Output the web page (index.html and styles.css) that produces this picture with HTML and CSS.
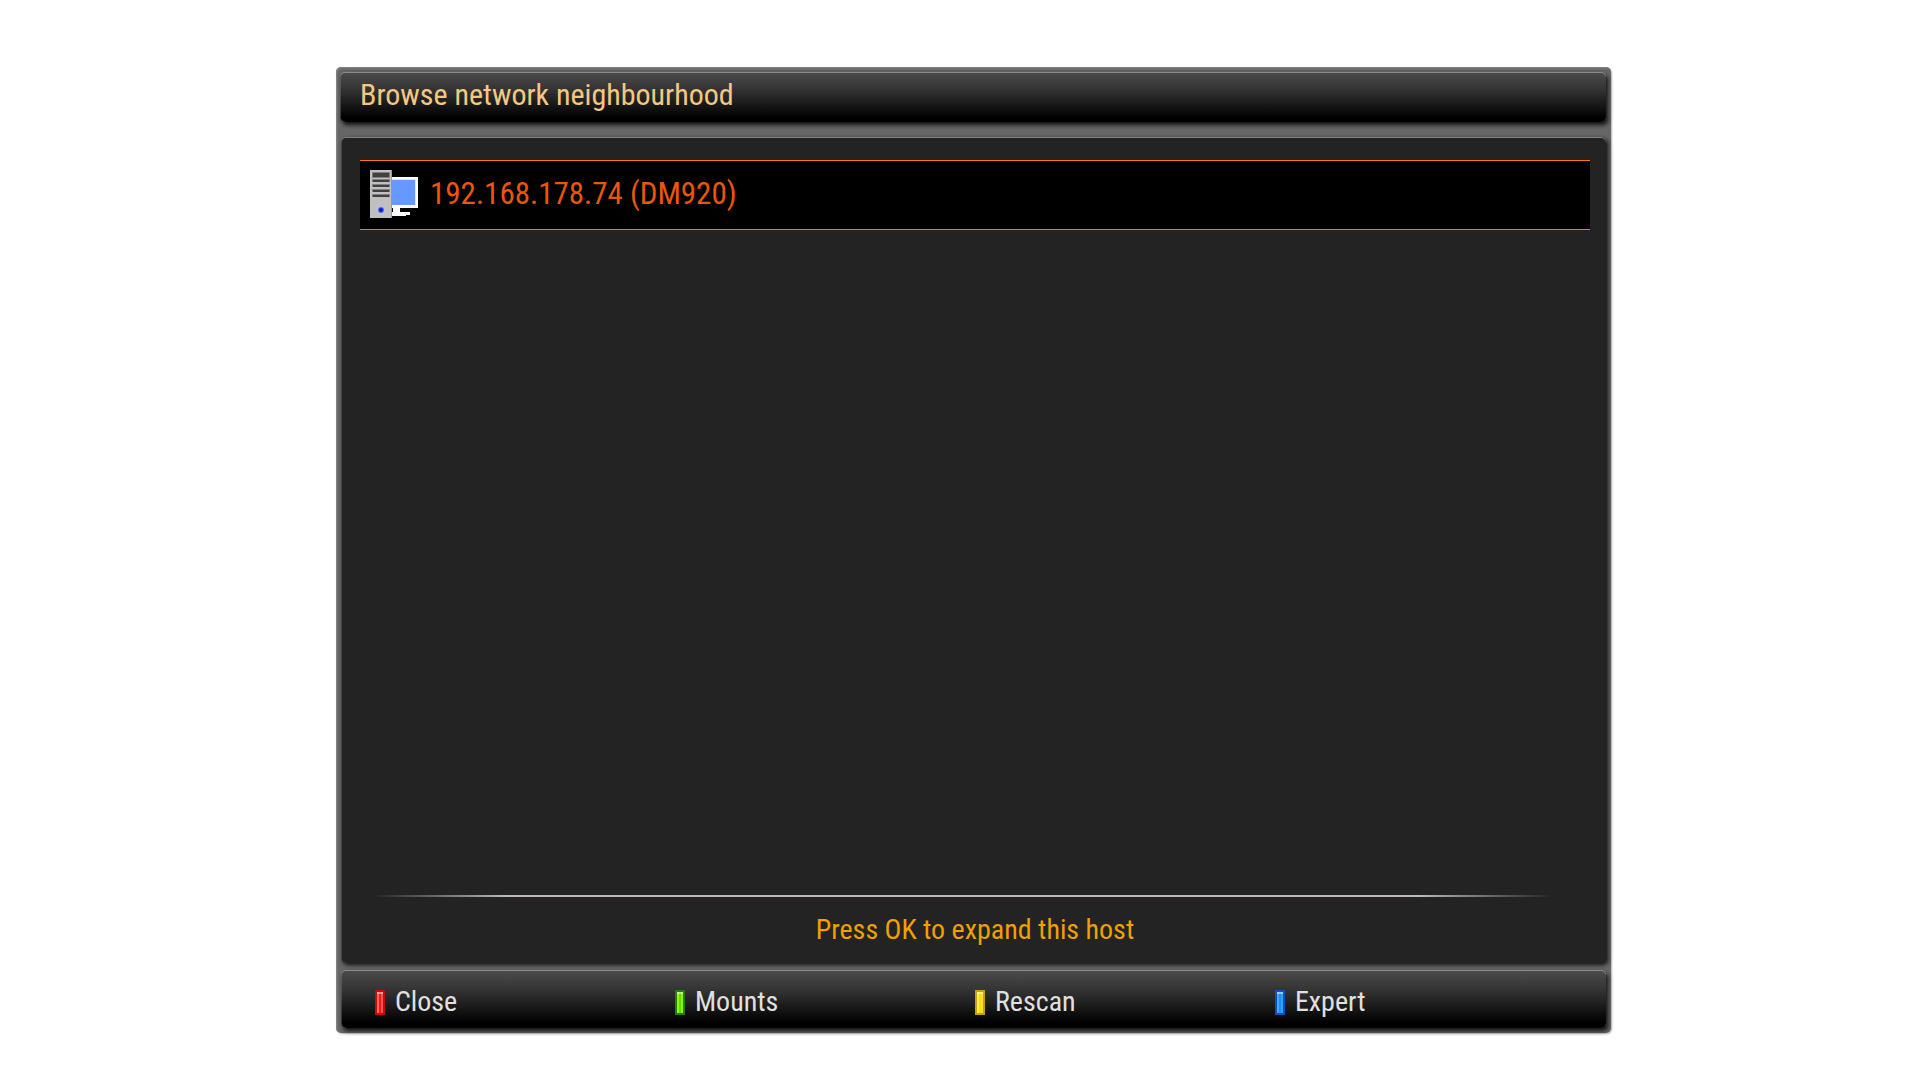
FILE: index.html
```
<!DOCTYPE html>
<html lang="en">

<head>
    <meta charset="utf-8">
    <meta name="viewport" content="width=device-width, initial-scale=1" />
    <title>Browse network neighbourhood</title>
    <link rel="stylesheet" href="styles.css">
</head>

<body>
    <div class="window">
        <header class="title">
            <h1>Browse network neighbourhood</h1>
        </header>
        <main class="panel">
            <ul class="hosts">
                <li>
                    <button class="host" type="button">
                        <svg class="pc" viewBox="0 0 48 48" aria-hidden="true">
                            <!-- monitor -->
                            <path fill="#fff" d="M21 7h27v31H30v4h10v3h-4v1H21v-4h2v-4h-2z" />
                            <path fill="#dfe8fb" d="M21 9h25v26H21z" />
                            <path fill="#6699ff" d="M21 10h24v25H21z" />
                            <!-- tower -->
                            <path fill="#c0c0c0" d="M0 0h22v48H0z" />
                            <path fill="#999" d="M21 0h1v48h-1z" />
                            <path fill="#808080" d="M2 2h18v6H2zM2 9h18v3H2zM2 14h18v3H2zM2 19h18v3H2zM2 24h18v3H2z" />
                            <path fill="#404040" d="M3 3h16v4H3zM3 10h16v2H3zM3 15h16v2H3zM3 20h16v2H3zM3 25h16v2H3z" />
                            <circle cx="11" cy="40" r="3" fill="#5070e8" />
                            <circle cx="11" cy="40" r="2" fill="#0020e0" />
                        </svg>
                        192.168.178.74 (DM920)
                    </button>
                </li>
            </ul>
            <hr class="line">
            <p class="hint">Press OK to expand this host</p>
        </main>
        <footer class="keys">
            <button class="key red" type="button"><i></i>Close</button>
            <button class="key green" type="button"><i></i>Mounts</button>
            <button class="key yellow" type="button"><i></i>Rescan</button>
            <button class="key blue" type="button"><i></i>Expert</button>
        </footer>
    </div>
</body>

</html>
```
FILE: styles.css
```
* {
    box-sizing: border-box;
}

body {
    margin: 0;
    min-height: 100vh;
    padding: 67px 16.1vw 47px 17.5vw;
    display: flex;
    background-color: white;
    font-family: "Roboto Condensed", "Liberation Sans Narrow", Roboto, sans-serif;
}

h1, p, ul {
    margin: 0;
    padding: 0;
    font-weight: normal;
}

ul {
    list-style: none;
}

button {
    border: 0;
    padding: 0;
    background: none;
    font-family: inherit;
    text-align: left;
    cursor: pointer;
}

.window {
    flex: 1;
    display: flex;
    flex-direction: column;
    padding: 5px 5px 5px 4px;
    border-radius: 5px;
    background-color: #666;
    box-shadow: inset 1px 1px 2px #8a8a8a, 1px 1px 2px rgba(0, 0, 0, 0.3);
}

.title, .keys {
    border-radius: 5px;
    background: linear-gradient(#4c4c4c, #333 35%, #000 92%);
    box-shadow: inset 0 1px 0 #8c8c8c, inset 1px 0 0 rgba(128, 128, 128, 0.4), 2px 3px 4px #111;
}

.title {
    height: 50px;
    padding-left: 20px;
    margin-bottom: 15px;
}

h1 {
    font-size: 30px;
    line-height: 46px;
    color: #f4c883;
}

.panel {
    flex: 1;
    display: flex;
    flex-direction: column;
    padding: 23px 16px 16px 19px;
    margin-left: 1px;
    margin-bottom: 7px;
    border-radius: 5px;
    background-color: #232323;
    box-shadow: inset 0 1px 0 #808080, inset 1px 0 0 #444, 2px 2px 4px #111;
}

.hosts {
    flex: 1;
}

.host {
    width: 100%;
    height: 70px;
    padding: 0 0 2px 10px;
    display: flex;
    align-items: center;
    gap: 12px;
    border-top: 1px solid #ff7800;
    border-bottom: 1px solid #ff7800;
    background-color: #000;
    color: #ea560b;
    font-size: 31px;
    line-height: 40px;
}

.pc {
    width: 48px;
    height: 48px;
}

.line {
    width: 100%;
    height: 2px;
    margin: 0;
    border: 0;
    background: linear-gradient(to right, transparent 1%, #c0b8bc 12%, #c0b8bc 86%, transparent 97%);
}

.hint {
    padding: 16px 0 0;
    font-size: 28px;
    line-height: 34px;
    text-align: center;
    color: #f0a000;
}

.keys {
    height: 58px;
    margin-left: 1px;
    padding: 5px 31px 0 34px;
    display: grid;
    grid-template-columns: repeat(4, 25%);
}

.key {
    display: flex;
    align-items: center;
    gap: 10px;
    color: #e0e0e0;
    font-size: 28px;
    line-height: 34px;
}

.key i {
    width: 10px;
    height: 25px;
    margin-top: 2px;
    border: 1px solid;
    box-shadow: inset 0 0 0 1px currentColor, inset 0 2px 0 1px rgba(255, 255, 255, 0.5);
}

.red i {
    color: #c80a0a;
    background: linear-gradient(to right, #ff6a60 35%, #ff1414 35%, #ff1414 65%, #f05a50 65%);
}

.green i {
    color: #1f7d14;
    background: linear-gradient(to right, #8cff00 35%, #60d80a 35%, #60d80a 65%, #8cf50a 65%);
}

.yellow i {
    color: #c8a000;
    background: linear-gradient(to right, #fff05a 35%, #ffdc00 35%, #ffdc00 65%, #f5dc3c 65%);
}

.blue i {
    color: #0a50c0;
    background: linear-gradient(to right, #3caaff 35%, #1e8cf0 35%, #1e8cf0 65%, #32a0f5 65%);
}
```
